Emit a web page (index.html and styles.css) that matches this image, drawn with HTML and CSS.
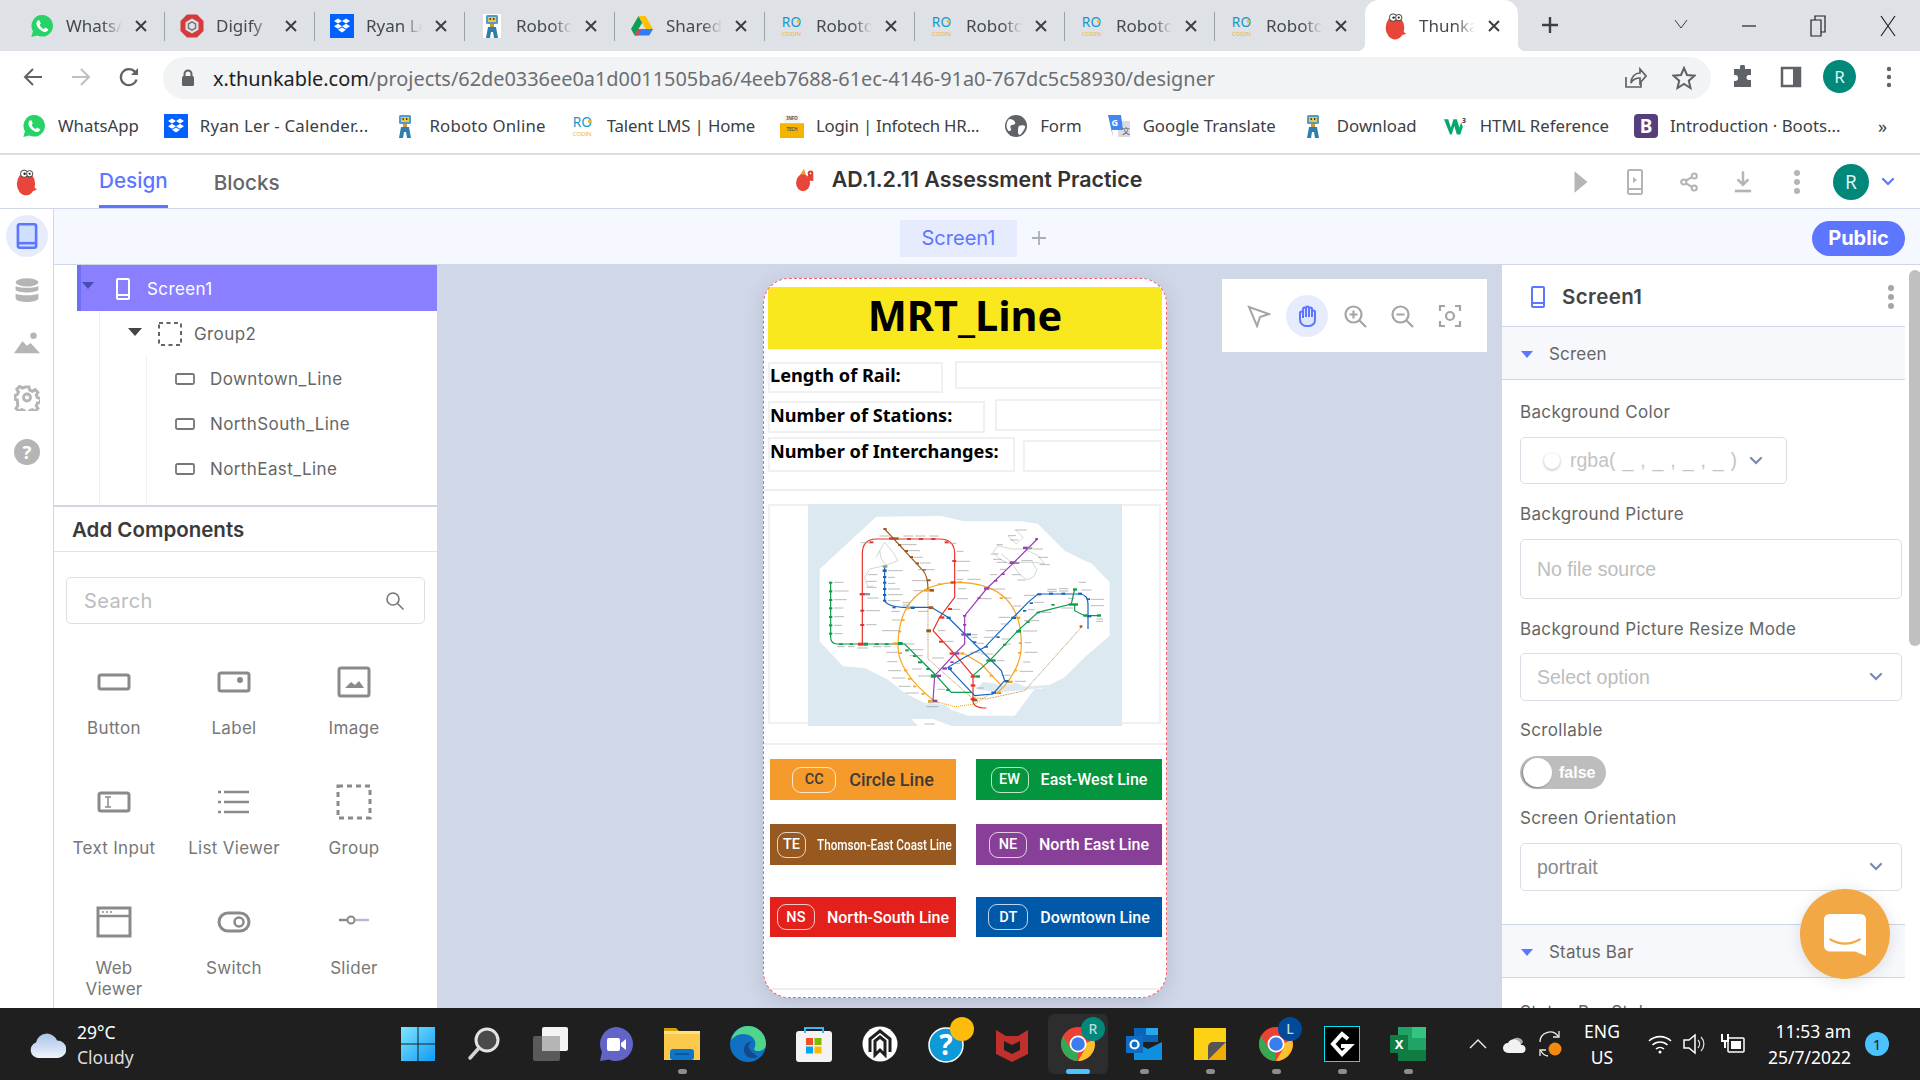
FILE: index.html
```html
<!DOCTYPE html>
<html lang="en">
<head>
<meta charset="utf-8">
<title>Thunkable</title>
<link rel="stylesheet" href="styles.css">
</head>
<body>
<svg class="defs" width="0" height="0" aria-hidden="true">
  <symbol id="wa" viewBox="0 0 24 24"><path fill="#25d366" d="M12.4 1A10.8 10.8 0 0 0 3 17.3L1.3 23l5.9-1.6A10.8 10.8 0 1 0 12.4 1z"/><path fill="#fff" d="M8.4 6.2c-.8.2-2 1.4-2 3.2 0 2 1.6 4.4 3.4 6 2 1.800 4.300 2.800 5.900 2.500 1.300-.3 2.500-1.400 2.500-2.700l-3-1.600-1.300 1.400c-1.800-.6-3.400-2.200-4.300-4.100l1.200-1.300L9.500 6.400z"/></symbol>
  <symbol id="dropbox" viewBox="0 0 24 24"><rect width="24" height="24" fill="#0061ff"/><path fill="#fff" d="M8 4.500l4 2.500-4 2.500L4 7zM16 4.500L20 7l-4 2.500L12 7zM8 9.700l4 2.500-4 2.500-4-2.500zM16 9.700l4 2.500-4 2.500-4-2.500zM8 15.800l4-2.400 4 2.400-4 2.700z"/></symbol>
  <symbol id="digify" viewBox="0 0 24 24"><path fill="#d43b3b" d="M7 .5h10L23.500 7v10L17 23.500H7L.5 17V7z"/><path fill="#dfe1e6" d="M12 4.500l6.500 3.700v7.600L12 19.500l-6.500-3.700V8.200z"/><path fill="#777" d="M12 7l4.300 2.500v5L12 17l-4.300-2.500v-5z"/><path fill="#dfe1e6" d="M12 8.700l2.800 1.600v3.400L12 15.300l-2.800-1.600v-3.400z"/></symbol>
  <symbol id="robot" viewBox="0 0 24 24"><rect x="3" width="18" height="24" fill="#fff"/><rect x="6" y="1" width="12" height="9" rx="1.500" fill="#4f9cc9"/><rect x="8" y="3" width="8" height="5" fill="#f0c445"/><rect x="9.500" y="4" width="1.300" height="2" fill="#333"/><rect x="13" y="4" width="1.300" height="2" fill="#333"/><rect x="10" y="10" width="4" height="3" fill="#c79a3d"/><path fill="#2f7fae" d="M8 13h8l2 11h-4l-1-6h-2l-1 6H6z"/></symbol>
  <symbol id="drive" viewBox="0 0 24 24"><path fill="#0f9d58" d="M8.500 2L1 15l3.700 6.500L12.300 8.500z"/><path fill="#ffc107" d="M8.500 2h7L23 15h-7.500z"/><path fill="#2f7cf6" d="M4.700 21.500L8.400 15H23l-3.700 6.500z"/><path fill="#ea4335" d="M4.700 21.500L8.400 15h3l-3.400 6.500z"/></symbol>
  <symbol id="thunk" viewBox="0 0 24 30"><ellipse cx="12" cy="17" rx="10" ry="12.500" fill="#e8463a"/><path fill="#e8463a" d="M19 20l5 3-4 2z"/><circle cx="10" cy="6" r="4" fill="#fff" stroke="#333"/><circle cx="16" cy="6" r="3.400" fill="#fff" stroke="#333"/><circle cx="10.500" cy="6" r="1.300" fill="#222"/><circle cx="16" cy="6" r="1.200" fill="#222"/></symbol>
  <symbol id="tfav" viewBox="0 0 24 30"><path fill="#e8a23a" d="M6 13l6-9 2 6z"/><ellipse cx="11" cy="19" rx="7.500" ry="9" fill="#e8463a"/><path fill="#e8463a" d="M16 11h6v6h-6z"/><circle cx="19" cy="9" r="3" fill="#d63a30"/><circle cx="19" cy="9" r="1" fill="#fff"/></symbol>
  <symbol id="globe" viewBox="0 0 24 24"><circle cx="12" cy="12" r="11" fill="#5f6368"/><path fill="#fff" d="M5 5c3 0 5 1 6 3s-1 3-3 3-2 3-1 4-1 3-3 1.500A10 10 0 0 1 5 5zM15 12c2-1 5-1 6 0s-2 6-4 8-3 0-3-2 0-5 1-6z"/></symbol>
  <symbol id="phone" viewBox="0 0 14 22"><rect x="1" y="1" width="12" height="20" rx="1" fill="none" stroke="currentColor" stroke-width="2"/><path d="M1 17h12" stroke="currentColor" stroke-width="2"/></symbol>
  <symbol id="chev" viewBox="0 0 14 10"><path d="M2 2l5 5 5-5" fill="none" stroke="currentColor" stroke-width="2.200" stroke-linecap="round"/></symbol>
  <symbol id="tri" viewBox="0 0 14 8"><path d="M0 0h14L7 8z" fill="currentColor"/></symbol>
  <symbol id="closex" viewBox="0 0 12 12"><path d="M1 1l10 10M11 1L1 11" stroke="#3c4043" stroke-width="2"/></symbol>
  <symbol id="chrome" viewBox="0 0 36 36"><circle cx="18" cy="18" r="17" fill="#ea4335"/><path fill="#34a853" d="M18 35A17 17 0 0 1 2.900 10.200L11 23l7 1-1 11z"/><path fill="#fbc02d" d="M35 18c0 9-7.500 17-17 17l7-12 1-6 8-3z"/><circle cx="18" cy="18" r="8.500" fill="#fff"/><circle cx="18" cy="18" r="6.800" fill="#3b7df0"/></symbol>
</svg>

<div class="app">
  <header class="tabs">
    <div class="tab"><svg class="fav"><use href="#wa"/></svg><span class="tab-title">WhatsApp</span><svg class="tab-x"><use href="#closex"/></svg></div>
    <div class="tab"><svg class="fav"><use href="#digify"/></svg><span class="tab-title">Digify</span><svg class="tab-x"><use href="#closex"/></svg></div>
    <div class="tab"><svg class="fav"><use href="#dropbox"/></svg><span class="tab-title">Ryan Ler</span><svg class="tab-x"><use href="#closex"/></svg></div>
    <div class="tab"><svg class="fav"><use href="#robot"/></svg><span class="tab-title">Roboto</span><svg class="tab-x"><use href="#closex"/></svg></div>
    <div class="tab"><svg class="fav"><use href="#drive"/></svg><span class="tab-title">Shared</span><svg class="tab-x"><use href="#closex"/></svg></div>
    <div class="tab"><svg class="fav" viewBox="0 0 22 26"><text x="0" y="14" class="ro-big">RO</text><circle cx="18" cy="8" r="1.800" fill="#f2b632"/><text x="0" y="24" class="ro-small">CODIN</text></svg><span class="tab-title">Roboto</span><svg class="tab-x"><use href="#closex"/></svg></div>
    <div class="tab"><svg class="fav" viewBox="0 0 22 26"><text x="0" y="14" class="ro-big">RO</text><circle cx="18" cy="8" r="1.800" fill="#f2b632"/><text x="0" y="24" class="ro-small">CODIN</text></svg><span class="tab-title">Roboto</span><svg class="tab-x"><use href="#closex"/></svg></div>
    <div class="tab"><svg class="fav" viewBox="0 0 22 26"><text x="0" y="14" class="ro-big">RO</text><circle cx="18" cy="8" r="1.800" fill="#f2b632"/><text x="0" y="24" class="ro-small">CODIN</text></svg><span class="tab-title">Roboto</span><svg class="tab-x"><use href="#closex"/></svg></div>
    <div class="tab tab-last"><svg class="fav" viewBox="0 0 22 26"><text x="0" y="14" class="ro-big">RO</text><circle cx="18" cy="8" r="1.800" fill="#f2b632"/><text x="0" y="24" class="ro-small">CODIN</text></svg><span class="tab-title">Roboto</span><svg class="tab-x"><use href="#closex"/></svg></div>
    <div class="tab tab-active"><svg class="fav fav-tall"><use href="#thunk"/></svg><span class="tab-title">Thunkable</span><svg class="tab-x"><use href="#closex"/></svg></div>
    <svg class="newtab" viewBox="0 0 18 18"><path d="M9 1v16M1 9h16" stroke="#3c4043" stroke-width="2.400"/></svg>
    <div class="win">
      <svg viewBox="0 0 14 10"><path d="M1 1l6 8 6-8" fill="none" stroke="#3c4043"/></svg>
      <svg viewBox="0 0 14 10"><path d="M0 5h14" stroke="#222" stroke-width="1.200"/></svg>
      <svg viewBox="0 0 16 22"><path d="M1 5h10v16H1zM5 5V1h10v16h-4" fill="none" stroke="#222" stroke-width="1.200"/></svg>
      <svg viewBox="0 0 16 22"><path d="M1 1l14 20M15 1L1 21" fill="none" stroke="#222" stroke-width="1.200"/></svg>
    </div>
  </header>

  <nav class="toolbar">
    <svg class="tb-ic" viewBox="0 0 22 22"><path d="M20 11H3M11 3l-8 8 8 8" fill="none" stroke="#5f6368" stroke-width="2"/></svg>
    <svg class="tb-ic" viewBox="0 0 22 22"><path d="M2 11h17M11 3l8 8-8 8" fill="none" stroke="#bdc1c6" stroke-width="2"/></svg>
    <svg class="tb-ic" viewBox="0 0 22 22"><path d="M18.500 13.500A8 8 0 1 1 17 6" fill="none" stroke="#5f6368" stroke-width="2.200"/><path d="M20 2v7h-7z" fill="#5f6368"/></svg>
    <div class="omni">
      <svg class="lock" viewBox="0 0 14 18"><path d="M3.500 8V5a3.500 3.500 0 0 1 7 0v3" fill="none" stroke="#5f6368" stroke-width="2"/><rect x="1" y="7" width="12" height="10" rx="1.500" fill="#5f6368"/></svg>
      <span class="url"><b>x.thunkable.com</b>/projects/62de0336ee0a1d0011505ba6/4eeb7688-61ec-4146-91a0-767dc5c58930/designer</span>
      <svg class="om-ic om-share" viewBox="0 0 24 24"><path d="M3 11v10h15v-5M8 17c0-6 4-10 9-10V3l6 7-6 7v-5c-4 0-7 1-9 5z" fill="none" stroke="#5f6368" stroke-width="1.700"/></svg>
      <svg class="om-ic" viewBox="0 0 24 24"><path d="M12 2l3 7 7.500.7-5.700 5 1.700 7.300L12 18l-6.500 4 1.700-7.300-5.700-5L9 9z" fill="none" stroke="#5f6368" stroke-width="2"/></svg>
    </div>
    <svg class="tb-ext" viewBox="0 0 24 24"><path fill="#5f6368" d="M9 2a2.500 2.500 0 0 1 5 0v2h6v6h-2a2.500 2.500 0 0 0 0 5h2v7H3v-6h1a3 3 0 0 0 0-6H3V4h6z"/></svg>
    <svg class="tb-side" viewBox="0 0 22 22"><path fill="none" stroke="#5f6368" stroke-width="2.500" d="M2 2h18v18H2z"/><path fill="#5f6368" d="M13 2h7v18h-7z"/></svg>
    <span class="avatar avatar-sm">R</span>
    <svg class="tb-dots" viewBox="0 0 6 22"><circle cx="3" cy="3" r="2.200" fill="#5f6368"/><circle cx="3" cy="11" r="2.200" fill="#5f6368"/><circle cx="3" cy="19" r="2.200" fill="#5f6368"/></svg>
  </nav>

  <nav class="bookmarks">
    <div class="bm"><svg class="bm-ic"><use href="#wa"/></svg><span>WhatsApp</span></div>
    <div class="bm bm-loose"><svg class="bm-ic"><use href="#dropbox"/></svg><span>Ryan Ler - Calender...</span></div>
    <div class="bm bm-loose"><svg class="bm-ic"><use href="#robot"/></svg><span>Roboto Online</span></div>
    <div class="bm bm-tight"><svg class="bm-ic" viewBox="0 0 22 26"><text x="0" y="14" class="ro-big">RO</text><circle cx="18" cy="8" r="1.800" fill="#f2b632"/><text x="0" y="24" class="ro-small">CODIN</text></svg><span>Talent LMS | Home</span></div>
    <div class="bm bm-tighter"><svg class="bm-ic" viewBox="0 0 26 26"><rect x="4" y="1" width="18" height="11" fill="#f3f3f3"/><text x="13" y="7" text-anchor="middle" class="info-t">INFO</text><rect y="10" width="26" height="16" fill="#f5b400"/><text x="13" y="18" text-anchor="middle" class="info-t">TECH</text></svg><span>Login | Infotech HR...</span></div>
    <div class="bm"><svg class="bm-ic"><use href="#globe"/></svg><span>Form</span></div>
    <div class="bm"><svg class="bm-ic" viewBox="0 0 24 24"><path fill="#dadce0" d="M11 7h12v16H11z"/><path fill="#4285f4" d="M1 1h13l2 15H5l1 7z"/><text x="4.500" y="12" class="gt-g">G</text><text x="15" y="20" class="gt-t">文</text></svg><span>Google Translate</span></div>
    <div class="bm bm-gap"><svg class="bm-ic"><use href="#robot"/></svg><span>Download</span></div>
    <div class="bm"><svg class="bm-ic" viewBox="0 0 28 24"><path fill="#04a96d" d="M0 4h5l3 10 3-10h4l3 10 2-6 2 5-3 9h-4l-3-10-3 10H7z"/><text x="21" y="8" class="w3-t">3</text></svg><span>HTML Reference</span></div>
    <div class="bm"><svg class="bm-ic" viewBox="0 0 24 24"><rect width="24" height="24" rx="4" fill="#563d7c"/><text x="12" y="19" text-anchor="middle" class="boot-t">B</text></svg><span>Introduction · Boots...</span></div>
    <span class="bm-more">»</span>
  </nav>

  <div class="apphead">
    <svg class="app-logo"><use href="#thunk"/></svg>
    <div class="apptab apptab-on">Design</div>
    <div class="apptab">Blocks</div>
    <div class="project"><svg class="proj-logo"><use href="#tfav"/></svg><span>AD.1.2.11 Assessment Practice</span></div>
    <div class="head-acts">
      <svg viewBox="0 0 14 24"><path d="M1 2l12 10L1 22z" fill="#b5b5b5"/></svg>
      <svg viewBox="0 0 16 26"><rect x="1" y="1" width="14" height="24" rx="1.500" fill="none" stroke="#b5b5b5" stroke-width="2"/><path d="M1 20h14" stroke="#b5b5b5" stroke-width="2"/><path d="M6 8l4 3-4 3z" fill="#b5b5b5"/></svg>
      <svg viewBox="0 0 24 26"><g fill="none" stroke="#b5b5b5" stroke-width="2.800"><circle cx="19" cy="5" r="3.400"/><circle cx="5" cy="13" r="3.400"/><circle cx="19" cy="21" r="3.400"/><path d="M8 11l8-4.500M8 15l8 4.500"/></g></svg>
      <svg viewBox="0 0 20 26"><path d="M10 1v15M4 10l6 6 6-6" fill="none" stroke="#b5b5b5" stroke-width="2.800"/><path d="M1 23h18" stroke="#b5b5b5" stroke-width="3"/></svg>
      <svg viewBox="0 0 8 26"><circle cx="4" cy="4" r="3" fill="#b5b5b5"/><circle cx="4" cy="13" r="3" fill="#b5b5b5"/><circle cx="4" cy="22" r="3" fill="#b5b5b5"/></svg>
    </div>
    <span class="avatar avatar-lg">R</span>
    <svg class="head-chev"><use href="#chev"/></svg>
  </div>

  <main class="work">
    <aside class="rail">
      <div class="rail-item rail-on"><svg viewBox="0 0 16 20"><rect x="1" y="1" width="14" height="18" rx="1.500" fill="#cfe0ff" stroke="#5d76ff" stroke-width="2"/><path d="M1 15.500h14" stroke="#5d76ff" stroke-width="2"/></svg></div>
      <div class="rail-item"><svg viewBox="0 -1 22 24"><g fill="#b5b5b5"><ellipse cx="11" cy="4" rx="10.500" ry="3.800"/><path d="M.5 7c2 2.500 19 2.500 21 0v4c-2 3-19 3-21 0zM.5 14c2 2.500 19 2.500 21 0v5c-2 4-19 4-21 0z"/></g></svg></div>
      <div class="rail-item"><svg viewBox="0 -2 28 28"><g fill="#b5b5b5"><circle cx="21" cy="3" r="3.500"/><path d="M0 22l9-13 5 5 4-3 10 11z"/></g></svg></div>
      <div class="rail-item"><svg viewBox="0 0 26 26"><path fill="none" stroke="#b5b5b5" stroke-width="3" d="M11 2h4l.7 3 2.700 1.200 2.700-1.600 2.800 2.800-1.600 2.700 1.100 2.600 3 .7v4l-3 .7-1.100 2.600 1.600 2.700-2.800 2.800-2.700-1.600-2.700 1.100-.7 3h-4l-.7-3-2.700-1.100-2.700 1.600-2.800-2.800 1.600-2.700L3.300 15 1 14.300v-4l2.300-.7 1.100-2.700-1.600-2.700 2.800-2.800L8.300 3z"/><circle cx="13" cy="12.500" r="3.500" fill="none" stroke="#b5b5b5" stroke-width="2.800"/></svg></div>
      <div class="rail-item"><svg viewBox="0 0 28 28"><circle cx="14" cy="14" r="14" fill="#b5b5b5"/><text x="14" y="21" text-anchor="middle" class="help-q">?</text></svg></div>
    </aside>

    <div class="stage">
      <div class="subbar">
        <div class="screen-tab">Screen1</div>
        <svg class="screen-add" viewBox="0 0 16 16"><path d="M8 1v14M1 8h14" stroke="#a9aeb9" stroke-width="1.800"/></svg>
        <div class="public">Public</div>
      </div>

      <div class="panels">
        <section class="left">
          <div class="tree">
            <div class="row-screen"><svg class="tri-s"><use href="#tri"/></svg><svg class="ic-phone-w"><use href="#phone"/></svg><span>Screen1</span></div>
            <div class="tree-l1">
              <div class="row-group"><svg class="tri-g"><use href="#tri"/></svg><svg class="ic-group" viewBox="0 0 24 24"><rect x="1" y="1" width="22" height="22" fill="none" stroke="#666" stroke-width="2" stroke-dasharray="4 3.500"/></svg><span>Group2</span></div>
              <div class="tree-l2">
                <div class="row-item"><svg class="ic-btn" viewBox="0 0 20 12"><rect x="1" y="1" width="18" height="10" rx="1.500" fill="none" stroke="#777" stroke-width="1.800"/></svg><span>Downtown_Line</span></div>
                <div class="row-item"><svg class="ic-btn" viewBox="0 0 20 12"><rect x="1" y="1" width="18" height="10" rx="1.500" fill="none" stroke="#777" stroke-width="1.800"/></svg><span>NorthSouth_Line</span></div>
                <div class="row-item"><svg class="ic-btn" viewBox="0 0 20 12"><rect x="1" y="1" width="18" height="10" rx="1.500" fill="none" stroke="#777" stroke-width="1.800"/></svg><span>NorthEast_Line</span></div>
              </div>
            </div>
          </div>
          <h3 class="add-title">Add Components</h3>
          <div class="search"><span>Search</span><svg viewBox="0 0 20 20"><circle cx="8" cy="8" r="6" fill="none" stroke="#777" stroke-width="1.600"/><path d="M12.500 12.500l6 6" stroke="#777" stroke-width="1.600"/></svg></div>
          <div class="comps">
            <div class="comp"><svg viewBox="0 0 36 36"><rect x="3" y="11" width="30" height="14" rx="2" fill="none" stroke="#8a8a8a" stroke-width="3"/></svg><span>Button</span></div>
            <div class="comp"><svg viewBox="0 0 36 36"><rect x="3" y="9" width="30" height="18" rx="2" fill="none" stroke="#8a8a8a" stroke-width="3"/><circle cx="24" cy="16" r="3" fill="#8a8a8a"/></svg><span>Label</span></div>
            <div class="comp"><svg viewBox="0 0 36 36"><rect x="3" y="4" width="30" height="28" rx="2" fill="none" stroke="#8a8a8a" stroke-width="3"/><path d="M9 24l6-6 4 3 4-4 5 7z" fill="#8a8a8a"/></svg><span>Image</span></div>
            <div class="comp"><svg viewBox="0 0 36 36"><rect x="3" y="9" width="30" height="18" rx="2" fill="none" stroke="#8a8a8a" stroke-width="3"/><path d="M9 13h6M9 23h6M12 13v10" stroke="#8a8a8a" stroke-width="1.500"/></svg><span>Text Input</span></div>
            <div class="comp"><svg viewBox="0 0 36 36"><path d="M8 8h25M8 18h25M8 28h25" stroke="#8a8a8a" stroke-width="2.600"/><path d="M2 8h3M2 18h3M2 28h3" stroke="#8a8a8a" stroke-width="2.600"/></svg><span>List Viewer</span></div>
            <div class="comp"><svg viewBox="0 0 36 36"><rect x="2" y="2" width="32" height="32" fill="none" stroke="#8a8a8a" stroke-width="3" stroke-dasharray="5 4"/></svg><span>Group</span></div>
            <div class="comp"><svg viewBox="0 0 36 36"><rect x="2" y="4" width="32" height="28" fill="none" stroke="#8a8a8a" stroke-width="3"/><path d="M2 12h32" stroke="#8a8a8a" stroke-width="2.500"/><path d="M6 8h10" stroke="#8a8a8a" stroke-width="1.500" stroke-dasharray="2 2"/></svg><span>Web<br>Viewer</span></div>
            <div class="comp"><svg viewBox="0 0 36 36"><rect x="3" y="9" width="30" height="18" rx="9" fill="none" stroke="#8a8a8a" stroke-width="3"/><circle cx="23" cy="18" r="4.500" fill="none" stroke="#8a8a8a" stroke-width="2.500"/></svg><span>Switch</span></div>
            <div class="comp"><svg viewBox="0 0 36 36"><path d="M3 16h8" stroke="#8a8a8a" stroke-width="2.500"/><path d="M19 16h14" stroke="#b9b8d8" stroke-width="2.500"/><circle cx="15" cy="16" r="3.500" fill="none" stroke="#8a8a8a" stroke-width="2"/></svg><span>Slider</span></div>
          </div>
        </section>

        <section class="canvas">
          <div class="phone">
            <div class="ph-title">MRT_Line</div>
            <div class="ph-row ph-row1"><div class="ph-label ph-l1">Length of Rail:</div><div class="ph-input ph-i1"></div></div>
            <div class="ph-row ph-row2"><div class="ph-label ph-l2">Number of Stations:</div><div class="ph-input ph-i2"></div></div>
            <div class="ph-row ph-row3"><div class="ph-label ph-l3">Number of Interchanges:</div><div class="ph-input ph-i3"></div></div>
            <div class="ph-rule ph-rule1"></div>
            <div class="ph-image">
              <svg class="map" viewBox="0 0 942 666">
                <rect width="942" height="666" fill="#dce9f1"/>
                <path fill="#fff" d="M205 38L400 36l70 16 170 0 50 8 80 80 60 30 20 8 55 57v160l-75 65-60 60-70 35h-20l-60 80H480l-50-18-20-15-60-5-60-30-50-40-70-35-65-5-70-75V195z"/>
                <path fill="#fff" d="M310 645h65l55 21H330z"/>
                <path fill="#dce9f1" d="M505 556l20-22 30 4 25 8 45-10 25 12 75-6 20 6-100 10-60 6-40-2z"/>
                <g fill="none" stroke-width="1.500" stroke="#9fb3a5">
                  <path d="M230 115l-15 25 5 25 15 20M230 115l25 30 15 25-40 15-45 10-15 25 10 30 15-5M215 140l-10 20"/>
                  <path d="M650 135l-40 0-40-10-15 20 20 20 30 15M650 135l40 20 20 25-30-5-30 0-40 0-30-25M612 178l20 30 25 20 20-10 10-20-15-25M625 80l20 20-20 20-25-25"/>
                </g>
                <g fill="none" stroke-width="3.600">
                  <path stroke="#f5a623" d="M380 592Q265 500 270 420 275 235 455 235 640 240 640 420 640 500 570 565"/>
                  <path stroke="#f5a623" d="M470 450l50 30 60 65"/>
                  <path stroke="#f5a623" stroke-dasharray="3 3" d="M380 592l60 16 60-8 45-30"/>
                  <path stroke="#9c5a1e" d="M230 75L345 200q15 15 15 60"/>
                  <path stroke="#9c5a1e" stroke-width="2" stroke-dasharray="3 2" d="M360 260V465l130 115 45 5 115-25L820 370"/>
                  <path stroke="#e5342b" d="M163 420V150q0-45 42-45H395q45 0 45 45V280L395 340 375 380 440 450 495 515V590q0 22 40 22"/>
                  <path stroke="#9b3cb7" d="M688 105L615 178 535 255 470 335V420L440 450 380 515 375 592"/>
                  <path stroke="#1565c0" d="M230 190V290q10 20 70 20H370l50 30L580 500l10 30-35 40-55 5-80-85 50-30 60-30L660 295l30-25H815q25 2 25 30v75"/>
                  <path stroke="#0d9b4c" d="M68 235V400q0 20 20 20H290l90 90 50 55h60"/>
                  <path stroke="#0d9b4c" d="M495 515L545 470 630 380 690 325l100-25 10-45M800 300v20l30 15h40"/>
                </g>
                <g fill="#e5342b"><rect x="155" y="267" width="16" height="7"/><rect x="157" y="317" width="12" height="6"/><rect x="157" y="360" width="12" height="6"/><rect x="150" y="416" width="16" height="9"/><rect x="184" y="112" width="12" height="6"/><rect x="243" y="100" width="16" height="7"/><rect x="297" y="102" width="12" height="6"/><rect x="333" y="102" width="12" height="6"/><rect x="370" y="102" width="12" height="6"/><rect x="410" y="112" width="12" height="6"/><rect x="433" y="168" width="12" height="6"/><rect x="428" y="232" width="14" height="7"/><rect x="420" y="312" width="12" height="6"/><rect x="395" y="337" width="14" height="7"/><rect x="393" y="410" width="12" height="6"/><rect x="425" y="445" width="14" height="7"/><rect x="488" y="514" width="14" height="7"/><rect x="488" y="541" width="14" height="7"/><rect x="488" y="582" width="14" height="7"/></g>
                <g fill="#f5a623"><rect x="255" y="415" width="14" height="8"/><rect x="348" y="255" width="14" height="8"/><rect x="390" y="238" width="10" height="5"/><rect x="450" y="232" width="12" height="5"/><rect x="575" y="280" width="10" height="5"/><rect x="625" y="338" width="12" height="7"/><rect x="632" y="415" width="10" height="5"/><rect x="630" y="444" width="10" height="5"/><rect x="618" y="497" width="10" height="5"/><rect x="600" y="530" width="14" height="7"/><rect x="565" y="563" width="14" height="7"/><rect x="295" y="309" width="12" height="7"/><rect x="280" y="346" width="10" height="5"/><rect x="270" y="380" width="10" height="5"/><rect x="272" y="445" width="10" height="5"/><rect x="288" y="497" width="10" height="5"/><rect x="300" y="522" width="10" height="5"/><rect x="315" y="545" width="10" height="5"/><rect x="340" y="567" width="10" height="5"/><rect x="360" y="588" width="14" height="7"/><rect x="457" y="445" width="12" height="7"/><rect x="545" y="513" width="10" height="5"/></g>
                <g fill="#1565c0"><rect x="224" y="196" width="12" height="8"/><rect x="225" y="216" width="10" height="6"/><rect x="225" y="233" width="10" height="6"/><rect x="225" y="252" width="10" height="6"/><rect x="225" y="270" width="10" height="6"/><rect x="225" y="287" width="10" height="6"/><rect x="253" y="308" width="10" height="5"/><rect x="308" y="308" width="12" height="7"/><rect x="416" y="338" width="12" height="7"/><rect x="475" y="388" width="14" height="7"/><rect x="495" y="412" width="10" height="5"/><rect x="530" y="426" width="10" height="5"/><rect x="565" y="397" width="10" height="5"/><rect x="610" y="338" width="14" height="7"/><rect x="645" y="318" width="10" height="5"/><rect x="665" y="295" width="10" height="5"/><rect x="688" y="268" width="12" height="6"/><rect x="723" y="266" width="12" height="6"/><rect x="760" y="266" width="12" height="6"/><rect x="810" y="266" width="12" height="6"/><rect x="836" y="283" width="10" height="5"/><rect x="836" y="333" width="14" height="7"/><rect x="420" y="490" width="12" height="7"/><rect x="550" y="563" width="14" height="7"/><rect x="590" y="528" width="12" height="7"/></g>
                <g fill="#0d9b4c"><rect x="63" y="233" width="10" height="6"/><rect x="63" y="259" width="10" height="6"/><rect x="63" y="285" width="10" height="6"/><rect x="63" y="310" width="10" height="6"/><rect x="63" y="336" width="10" height="6"/><rect x="63" y="361" width="10" height="6"/><rect x="63" y="386" width="10" height="6"/><rect x="93" y="418" width="12" height="5"/><rect x="125" y="418" width="10" height="5"/><rect x="166" y="416" width="14" height="9"/><rect x="200" y="418" width="12" height="5"/><rect x="230" y="418" width="12" height="5"/><rect x="270" y="414" width="14" height="9"/><rect x="292" y="436" width="10" height="6"/><rect x="315" y="453" width="10" height="6"/><rect x="330" y="472" width="12" height="6"/><rect x="355" y="492" width="10" height="6"/><rect x="368" y="511" width="16" height="10"/><rect x="415" y="555" width="10" height="6"/><rect x="502" y="514" width="14" height="7"/><rect x="535" y="466" width="28" height="7"/><rect x="585" y="420" width="10" height="5"/><rect x="625" y="378" width="14" height="8"/><rect x="655" y="352" width="10" height="5"/><rect x="686" y="323" width="10" height="5"/><rect x="730" y="300" width="10" height="5"/><rect x="782" y="298" width="28" height="7"/><rect x="795" y="253" width="12" height="7"/><rect x="826" y="331" width="14" height="7"/><rect x="867" y="331" width="12" height="7"/></g>
                <g fill="#9b3cb7"><rect x="682" y="102" width="8" height="6"/><rect x="645" y="128" width="16" height="7"/><rect x="605" y="172" width="20" height="8"/><rect x="580" y="208" width="10" height="5"/><rect x="558" y="228" width="10" height="5"/><rect x="528" y="250" width="16" height="7"/><rect x="508" y="280" width="10" height="5"/><rect x="465" y="333" width="10" height="5"/><rect x="465" y="360" width="10" height="5"/><rect x="460" y="388" width="14" height="7"/><rect x="440" y="445" width="14" height="7"/><rect x="427" y="472" width="10" height="5"/><rect x="403" y="490" width="14" height="7"/><rect x="385" y="512" width="14" height="7"/><rect x="374" y="587" width="14" height="7"/></g>
                <g fill="#9c5a1e"><rect x="226" y="72" width="10" height="6"/><rect x="258" y="100" width="14" height="7"/><rect x="270" y="120" width="10" height="6"/><rect x="290" y="138" width="10" height="6"/><rect x="305" y="156" width="10" height="6"/><rect x="323" y="175" width="10" height="6"/><rect x="345" y="195" width="8" height="5"/><rect x="356" y="226" width="12" height="6"/><rect x="364" y="255" width="14" height="8"/><rect x="362" y="307" width="14" height="8"/><rect x="355" y="376" width="14" height="9"/><rect x="492" y="585" width="16" height="7"/><rect x="815" y="364" width="8" height="7"/></g>
                <g fill="#83a08d"><rect x="170" y="267" width="16" height="7"/><rect x="224" y="184" width="14" height="7"/><rect x="659" y="130" width="14" height="6"/><rect x="620" y="174" width="14" height="6"/></g>
                <path fill="none" stroke="#8d8d8d" stroke-width="1.800" d="M78 235h28M78 261h44M78 287h38M78 312h28M78 338h30M78 364h24M78 389h26M88 428h22M120 428h20M148 432h32M195 428h26M228 428h20M286 420h34M252 348h26M222 380h48M235 445h34M238 473h30M241 500h38M252 522h40M272 547h36M292 567h40M300 437h46M305 455h40M312 495h30M330 516h36M388 556h24M240 200h44M240 220h20M240 238h22M240 255h36M240 272h44M240 290h36M250 322h26M284 296h22M284 303h22M330 322h30M180 212h28M176 232h30M176 250h30M178 282h34M174 320h42M174 362h32M214 96h30M286 96h30M322 96h30M364 96h28M158 116h26M423 118h22M446 142h20M446 172h40M446 200h36M446 226h20M450 254h24M446 284h34M432 316h24M282 122h44M300 140h36M316 160h28M336 177h32M330 197h50M312 230h46M316 260h28M390 380h22M408 412h28M478 226h40M545 255h46M519 284h32M588 282h22M616 306h24M572 340h34M578 360h24M533 380h40M527 400h36M580 405h26M585 420h24M490 392h18M490 400h18M506 418h22M487 445h30M518 450h36M566 470h24M645 381h42M650 416h20M650 445h38M645 474h22M635 502h40M620 532h34M580 514h28M557 568h26M372 462h36M436 446h20M436 478h20M505 552h22M648 350h46M700 325h30M718 256h28M718 262h28M753 254h28M753 261h28M780 283h20M760 312h36M648 274h40M678 295h30M660 317h20M812 235h22M820 258h30M848 286h40M848 305h40M865 345h20M865 352h20M565 122h20M548 150h24M555 166h26M576 196h22M546 212h22M566 175h30M612 212h26M628 228h24M640 170h34M675 135h30M690 160h30M695 182h30M620 78h36M600 95h24M606 108h24M360 596h34M355 608h36M350 660h30"/>
              </svg>
            </div>
            <div class="ph-rule ph-rule2"></div>
            <div class="badges">
              <div class="badge b-cc"><span class="pill p-cc">CC</span><span class="b-txt">Circle Line</span></div>
              <div class="badge b-ew"><span class="pill p-md">EW</span><span class="b-txt">East-West Line</span></div>
              <div class="badge b-te"><span class="pill p-sm">TE</span><span class="b-txt b-narrow">Thomson-East Coast Line</span></div>
              <div class="badge b-ne"><span class="pill p-md">NE</span><span class="b-txt">North East Line</span></div>
              <div class="badge b-ns b-low"><span class="pill p-md">NS</span><span class="b-txt">North-South Line</span></div>
              <div class="badge b-dt b-low"><span class="pill p-lg">DT</span><span class="b-txt">Downtown Line</span></div>
            </div>
            <div class="ph-rule ph-rule3"></div>
          </div>

          <div class="canvas-tools">
            <svg viewBox="0 0 24 24"><path d="M2 3l20 7-9 3-3 9z" fill="none" stroke="#a5a5a5" stroke-width="2"/></svg>
            <span class="tool-on"><svg viewBox="0 0 24 24"><path d="M5 13V9a1.500 1.500 0 0 1 3 0V5a1.500 1.500 0 0 1 3 0V4a1.500 1.500 0 0 1 3 0v1a1.500 1.500 0 0 1 3 0v3a1.500 1.500 0 0 1 3 0v8a6 6 0 0 1-6 6h-3c-3 0-6-3-6-6zM8 9v5M11 5v8M14 4v9M17 6v7" fill="#dfe6ff" stroke="#5d76ff" stroke-width="2"/></svg></span>
            <svg viewBox="0 0 24 24"><circle cx="10.500" cy="10.500" r="8" fill="none" stroke="#a5a5a5" stroke-width="2.200"/><path d="M16.500 16.500L23 23M6.500 10.500h8M10.500 6.500v8" stroke="#a5a5a5" stroke-width="2.200"/></svg>
            <svg viewBox="0 0 24 24"><circle cx="10.500" cy="10.500" r="8" fill="none" stroke="#a5a5a5" stroke-width="2.200"/><path d="M16.500 16.500L23 23M6.500 10.500h8" stroke="#a5a5a5" stroke-width="2.200"/></svg>
            <svg viewBox="0 0 24 24"><path d="M2 7V2h5M17 2h5v5M22 17v5h-5M7 22H2v-5" fill="none" stroke="#a5a5a5" stroke-width="2.200"/><circle cx="12" cy="12" r="4" fill="none" stroke="#a5a5a5" stroke-width="2.200"/></svg>
          </div>
        </section>

        <section class="right">
          <div class="props">
            <div class="prop-head"><svg class="ic-phone-b"><use href="#phone"/></svg><span>Screen1</span><svg class="prop-dots" viewBox="0 0 8 26"><circle cx="4" cy="4" r="3" fill="#a5a5a5"/><circle cx="4" cy="13" r="3" fill="#a5a5a5"/><circle cx="4" cy="22" r="3" fill="#a5a5a5"/></svg></div>
            <div class="sec"><svg class="sec-tri"><use href="#tri"/></svg><span>Screen</span></div>
            <div class="form">
              <label class="f-label f-first">Background Color</label>
              <div class="f-box f-color"><span class="swatch"></span><span class="rgba">rgba( _ , _ , _ , _ )</span><svg class="f-chev"><use href="#chev"/></svg></div>
              <label class="f-label">Background Picture</label>
              <div class="f-box f-tall">No file source</div>
              <label class="f-label">Background Picture Resize Mode</label>
              <div class="f-box f-tight">Select option<svg class="f-chev f-end"><use href="#chev"/></svg></div>
              <label class="f-label f-l16">Scrollable</label>
              <div class="toggle"><span class="knob"></span><span>false</span></div>
              <label class="f-label f-l16">Screen Orientation</label>
              <div class="f-box f-val">portrait<svg class="f-chev f-end"><use href="#chev"/></svg></div>
            </div>
            <div class="sec sec-status"><svg class="sec-tri"><use href="#tri"/></svg><span>Status Bar</span></div>
            <label class="f-label f-cut">Status Bar Style</label>
          </div>
          <div class="scroll"><span class="thumb"></span></div>
        </section>
      </div>
    </div>
  </main>

  <div class="chat"><svg viewBox="0 0 46 46"><path fill="#fff" d="M6 0h34a6 6 0 0 1 6 6v40l-12-5H6a6 6 0 0 1-6-6V6a6 6 0 0 1 6-6z"/><path d="M7 28q16 9 32 0" fill="none" stroke="#f2a945" stroke-width="2.500" stroke-linecap="round"/></svg></div>

  <footer class="taskbar">
    <div class="weather">
      <svg viewBox="0 0 36 32"><defs><linearGradient id="cl" x1="0" y1="0" x2="0" y2="1"><stop offset="0" stop-color="#a9c3e8"/><stop offset="1" stop-color="#eef3fb"/></linearGradient></defs><path fill="url(#cl)" d="M8 30a8 8 0 0 1-2-15.500 11 11 0 0 1 21-2A8.500 8.500 0 0 1 28 30z"/></svg>
      <div class="w-txt"><span>29°C</span><span class="w-sub">Cloudy</span></div>
    </div>
    <div class="dock">
      <div class="dk"><svg viewBox="0 0 36 36"><defs><linearGradient id="win" x1="0" y1="0" x2="1" y2="1"><stop offset="0" stop-color="#7fe6ff"/><stop offset="1" stop-color="#0f9bf5"/></linearGradient></defs><path fill="url(#win)" d="M1 1h16.500v16.500H1zM18.500 1H35v16.500H18.500zM1 18.500h16.500V35H1zM18.500 18.500H35V35H18.500z"/></svg></div>
      <div class="dk"><svg viewBox="0 0 36 36"><circle cx="21" cy="14" r="11" fill="#4a4a4a" stroke="#e4e4e4" stroke-width="3"/><path d="M12 23l-8 9" stroke="#d4d4d4" stroke-width="3.500" stroke-linecap="round"/></svg></div>
      <div class="dk"><svg viewBox="0 0 36 36"><rect x="1" y="10" width="27" height="25" rx="2" fill="#5a5a5a"/><rect x="10" y="1" width="26" height="24" rx="2" fill="#f4f4f4"/><rect x="10" y="10" width="18" height="15" fill="#b5b5b5"/></svg></div>
      <div class="dk"><svg viewBox="0 0 36 36"><path fill="#6264c8" d="M18 1a17 17 0 1 1-7 32.500L2 35l2-9A17 17 0 0 1 18 1z"/><rect x="9" y="12" width="13" height="13" rx="2" fill="#fff"/><path d="M23 17l5-4v11l-5-4z" fill="#fff"/></svg></div>
      <div class="dk dk-dot"><svg viewBox="0 0 36 36"><path fill="#d69e0f" d="M0 2h12l4 4h-16z"/><path fill="#fbc94d" d="M0 5h36v29H0z"/><path fill="#ffe27f" d="M0 5h36v3H0z"/><rect x="6" y="23" width="24" height="11" rx="3" fill="#0f75c8"/><path d="M11 28h14" stroke="#0a4f8c" stroke-width="1.500"/></svg></div>
      <div class="dk"><svg viewBox="0 0 36 36"><circle cx="18" cy="18" r="18" fill="#0f70c4"/><path fill="#4fd68b" d="M18 0a18 18 0 0 1 18 18c0 5-4 7-8 7-3 0-5-2-3-4 2-8-4-13-12-13C7 8 3 12 1 14 3 6 10 0 18 0z"/><path fill="#134a8e" d="M28 31c-8 3-14-1-14-7s4-9 9-8c-3 0-5 3-4 6s5 5 9 9z"/></svg></div>
      <div class="dk"><svg viewBox="0 0 36 36"><rect y="5" width="36" height="31" rx="3" fill="#f3f3f3"/><path fill="none" stroke="#3cb6ee" stroke-width="2" d="M9 7V2h18v5"/><path fill="#f25022" d="M10 12h7v7h-7z"/><path fill="#7fba00" d="M18.500 12h7v7h-7z"/><path fill="#00a4ef" d="M10 20.500h7v7h-7z"/><path fill="#ffb900" d="M18.500 20.500h7v7h-7z"/></svg></div>
      <div class="dk"><svg viewBox="0 0 36 36"><circle cx="18" cy="18" r="17.500" fill="#fff"/><path fill="none" stroke="#1f1f1f" stroke-width="3" d="M8 26V13l10-8 10 8v13M13 29V15l5-4 5 4v14l-5-5z"/></svg></div>
      <div class="dk"><svg class="big" viewBox="0 0 46 46"><circle cx="18" cy="28" r="17" fill="#0e9ad8" stroke="#fff" stroke-width="1.500"/><text x="18" y="38" text-anchor="middle" class="qmark">?</text><circle cx="34" cy="12" r="12" fill="#fdbc0b"/></svg></div>
      <div class="dk"><svg viewBox="0 0 36 36"><path fill="#c0302c" d="M2 4l10 6h12l10-6v24L18 36 2 28z"/><path fill="#1f1f1f" d="M10 15l8 4 8-4v9l-8 4-8-4z"/></svg></div>
      <div class="dk dk-on"><svg class="big" viewBox="0 0 46 46"><use href="#chrome" x="0" y="9" width="36" height="36"/><circle cx="33" cy="12" r="12" fill="#00897b"/><text x="33" y="17" text-anchor="middle" class="ov-letter">R</text></svg></div>
      <div class="dk dk-dot"><svg viewBox="0 0 36 36"><path fill="#0a64b8" d="M8 2h24v14H8z"/><path fill="#28a8ea" d="M20 2h12v7H20z"/><path fill="#0f8fe0" d="M8 16l14 7 14-7v18H8z"/><rect y="10" width="17" height="17" fill="#0f6cc4"/><circle cx="8.500" cy="18.500" r="4" fill="none" stroke="#fff" stroke-width="2.200"/></svg></div>
      <div class="dk dk-dot"><svg viewBox="0 0 36 36"><rect x="2" y="2" width="32" height="32" fill="#fcd116"/><path fill="#efab08" d="M16 34l18-18v18z"/><path fill="#555" d="M16 34V21a5 5 0 0 1 5-5h13z"/></svg></div>
      <div class="dk dk-dot"><svg class="big" viewBox="0 0 46 46"><use href="#chrome" x="0" y="9" width="36" height="36"/><circle cx="32" cy="12" r="12" fill="#004a99"/><text x="32" y="17" text-anchor="middle" class="ov-letter">L</text></svg></div>
      <div class="dk dk-dot"><svg viewBox="0 0 36 36"><rect x=".5" y=".5" width="35" height="35" fill="#000" stroke="#00e5f2"/><path fill="none" stroke="#fff" stroke-width="4" d="M24 13l-6-5-9 10 9 10 8-8h-9"/></svg></div>
      <div class="dk dk-dot"><svg viewBox="0 0 36 36"><path fill="#21a366" d="M8 1h28v34H8z"/><path fill="#33c481" d="M22 1h14v11H22z"/><path fill="#107c41" d="M8 24h28v11H8z"/><rect y="9" width="18" height="18" fill="#107c41"/><text x="9" y="23" text-anchor="middle" class="xl">X</text></svg></div>
    </div>
    <div class="tray">
      <svg class="tr-up" viewBox="0 0 18 10"><path d="M1 9l8-8 8 8" fill="none" stroke="#eee" stroke-width="1.400"/></svg>
      <svg class="tr-cloud" viewBox="0 0 24 18"><path fill="#aaa" d="M9 6a6 6 0 0 1 11 1l-3 4H9z"/><path fill="#f2f2f2" d="M5 18a5 5 0 0 1 0-10 7 7 0 0 1 13 2 4 4 0 0 1 1 8z"/></svg>
      <svg class="tr-sync" viewBox="0 0 26 30"><path d="M3 13a10 10 0 0 1 18-6M4 22a9 9 0 0 0 7 5" fill="none" stroke="#eee" stroke-width="1.300"/><path d="M22 2v6h-6M3 27v-6h6" fill="none" stroke="#eee" stroke-width="1.300"/><circle cx="18" cy="20" r="6.500" fill="#f28a10"/></svg>
      <div class="tr-lang"><span>ENG</span><span>US</span></div>
      <svg class="tr-wifi" viewBox="0 0 24 20"><path d="M1 7a16 16 0 0 1 22 0M4.500 11a11 11 0 0 1 15 0M8 15a6 6 0 0 1 8 0" fill="none" stroke="#fff" stroke-width="1.600"/><circle cx="12" cy="18" r="1.500" fill="#fff"/></svg>
      <svg class="tr-vol" viewBox="0 0 24 22"><path d="M1 7h5l6-5v18l-6-5H1z" fill="none" stroke="#fff" stroke-width="1.500"/><path d="M15 7a6 6 0 0 1 0 8M18 4a10 10 0 0 1 0 14" fill="none" stroke="#ddd" stroke-width="1.300"/></svg>
      <svg class="tr-bat" viewBox="0 0 26 22"><rect x="8" y="5" width="16" height="14" rx="1" fill="none" stroke="#fff" stroke-width="1.500"/><rect x="11" y="8" width="10" height="8" fill="#fff"/><path d="M2 1v7h6V1M5 8v7" stroke="#fff" stroke-width="2" fill="none"/></svg>
      <div class="tr-time"><span>11:53 am</span><span>25/7/2022</span></div>
      <span class="tr-note">1</span>
    </div>
  </footer>
</div>
</body>
</html>
```
FILE: styles.css
```css
* { box-sizing: border-box; }
html, body { margin: 0; height: 100%; overflow: hidden; }
body { font-family: "Inter", "Noto Sans", sans-serif; color: #555; background: #fff; }
.defs { position: absolute; }
.app { position: relative; display: flex; flex-direction: column; width: 1920px; height: 1080px; overflow: hidden; }
svg { display: block; flex: none; }

.ro-big { font: 400 15px "Noto Sans", sans-serif; fill: #1697c9; }
.ro-small { font: 400 6.500px "Noto Sans", sans-serif; fill: #f2b632; }
.gt-g { font: 700 9px "Noto Sans", sans-serif; fill: #fff; }
.gt-t { font: 400 8px "Noto Sans CJK SC", sans-serif; fill: #555; }
.w3-t { font: 700 8px "Noto Sans", sans-serif; fill: #333; }
.boot-t { font: 700 19px "Noto Sans", sans-serif; fill: #fff; }
.info-t { font: 700 5px "Noto Sans", sans-serif; fill: #555; }
.help-q { font: 700 20px "Noto Sans", sans-serif; fill: #fff; }
.qmark { font: 700 28px "Noto Sans", sans-serif; fill: #fff; }
.ov-letter { font: 500 14px "Noto Sans", sans-serif; fill: #b8dcd6; }
.xl { font: 700 13px "Noto Sans", sans-serif; fill: #fff; }

/* browser tab strip */
.tabs { flex: none; height: 51px; background: #dee1e6; display: flex; padding-left: 15px; position: relative; }
.tab { width: 150px; height: 51px; display: flex; align-items: center; padding-left: 15px; position: relative; color: #45494f; font: 17px "Noto Sans", sans-serif; }
.tab::after { content: ""; position: absolute; right: 0; top: 12px; height: 29px; width: 1px; background: #9aa0a6; }
.tab-last::after, .tab-active::after { display: none; }
.fav { width: 24px; height: 24px; margin-right: 12px; }
.fav-tall { height: 28px; }
.tab-title { width: 56px; overflow: hidden; white-space: nowrap; -webkit-mask-image: linear-gradient(90deg, #000 65%, transparent 100%); mask-image: linear-gradient(90deg, #000 65%, transparent 100%); }
.tab-x { margin-left: 13px; width: 12px; height: 12px; }
.tab-active { width: 153px; background: #fff; border-radius: 14px 14px 0 0; padding-left: 18px; }
.tab-active::before { content: ""; position: absolute; left: -8px; right: -8px; bottom: 0; height: 8px; background: radial-gradient(circle at 0 0, #dee1e6 8px, #fff 8.500px) left/8px 8px no-repeat, radial-gradient(circle at 100% 0, #dee1e6 8px, #fff 8.500px) right/8px 8px no-repeat; }
.newtab { width: 18px; height: 18px; margin: 16px 0 0 23px; }
.win { margin-left: auto; display: flex; align-items: center; gap: 54px; padding-right: 24px; }
.win svg:nth-child(1) { width: 14px; height: 10px; margin-top: -3px; }
.win svg:nth-child(2) { width: 14px; height: 10px; }
.win svg:nth-child(3), .win svg:nth-child(4) { width: 16px; height: 24px; }

/* browser toolbar */
.toolbar { flex: none; height: 51px; background: #fff; display: flex; align-items: center; padding-left: 22px; }
.tb-ic { width: 22px; height: 22px; margin-right: 26px; }
.omni { width: 1548px; height: 42px; margin: 3px 0 0 -3px; border-radius: 21px; background: #f1f3f4; display: flex; align-items: center; padding-left: 18px; }
.lock { width: 14px; height: 18px; }
.url { margin-left: 18px; font: 19.900px "Noto Sans", sans-serif; color: #6b6e72; white-space: nowrap; }
.url b { font-weight: 400; color: #202124; }
.om-ic { width: 24px; height: 24px; }
.om-share { margin-left: auto; margin-right: 25px; }
.omni .om-ic:last-child { margin-right: 15px; }
.tb-ext { width: 24px; height: 24px; margin-left: 20px; }
.tb-side { width: 22px; height: 22px; margin-left: 25px; }
.avatar { border-radius: 50%; background: #00897b; color: #dff3ef; display: flex; align-items: center; justify-content: center; font: 17px "Noto Sans", sans-serif; flex: none; }
.avatar-sm { width: 33px; height: 33px; margin-left: 21px; }
.tb-dots { width: 6px; height: 22px; margin-left: 30px; }

/* bookmarks */
.bookmarks { flex: none; height: 53px; background: #fff; border-bottom: 2px solid #dadce0; display: flex; align-items: center; padding: 0 0 4px 22px; font: 16.800px "Noto Sans", sans-serif; color: #3c4043; position: relative; }
.bm { display: flex; align-items: center; gap: 12px; margin-right: 25px; white-space: nowrap; }
.bm-loose { letter-spacing: .2px; }
.bm-tight { letter-spacing: -.15px; }
.bm-tighter { letter-spacing: -.25px; }
.bm-gap { margin-right: 27px; }
.bm-ic { width: 24px; height: 24px; }
.bm-more { position: absolute; left: 1878px; font-size: 18px; }

/* app header */
.apphead { flex: none; height: 54px; background: #fff; border-bottom: 1px solid #ced6e8; display: flex; align-items: stretch; padding-left: 15px; position: relative; }
.app-logo { width: 22px; height: 28px; align-self: center; }
.apptab { font-size: 20.700px; font-weight: 500; color: #666; margin-left: 46px; display: flex; align-items: center; border-bottom: 3px solid transparent; padding-top: 4px; }
.apptab-on { margin-left: 62px; color: #5d76ff; border-bottom-color: #5d76ff; padding: 0; }
.project { display: flex; align-items: center; gap: 16px; margin-left: 512px; font-size: 21.400px; font-weight: 600; color: #333; padding-bottom: 5px; }
.proj-logo { width: 24px; height: 28px; }
.head-acts { display: flex; align-items: center; margin-left: auto; gap: 36px; }
.head-acts svg { width: 18px; height: 26px; }
.avatar-lg { width: 36px; height: 36px; align-self: center; margin-left: 27px; font-size: 19px; }
.head-chev { width: 14px; height: 10px; align-self: center; margin: 0 25px 0 12px; color: #5d76ff; }

/* work area */
.work { flex: 1; display: flex; min-height: 0; }
.rail { width: 54px; flex: none; border-right: 1px solid #ced6e8; display: flex; flex-direction: column; align-items: center; padding-top: 6px; background: #fff; }
.rail-item { width: 42px; height: 54px; display: flex; align-items: center; justify-content: center; }
.rail-item svg { width: 26px; height: 26px; }
.rail-on { height: 42px; margin-bottom: 6px; background: #e6ecfd; border-radius: 50%; }
.stage { flex: 1; display: flex; flex-direction: column; min-width: 0; }
.subbar { flex: none; height: 56px; background: #f5f8fe; border-bottom: 1px solid #ced6e8; display: flex; align-items: center; }
.screen-tab { margin: 3px 0 0 846px; width: 117px; height: 37px; background: #e6ecfd; color: #5d76ff; font-size: 20px; display: flex; align-items: center; justify-content: center; }
.screen-add { width: 16px; height: 16px; margin: 2px 0 0 14px; }
.public { margin: 3px 15px 0 auto; width: 93px; height: 35px; border-radius: 18px; background: #5d76ff; color: #fff; font-weight: 700; font-size: 20px; display: flex; align-items: center; justify-content: center; }
.panels { flex: 1; display: flex; min-height: 0; }

/* left panel */
.left { width: 383px; flex: none; background: #fff; display: flex; flex-direction: column; overflow: hidden; }
.tree { height: 242px; flex: none; border-bottom: 2px solid #ced6e8; display: flex; flex-direction: column; font-size: 17px; color: #666; overflow: hidden; letter-spacing: .4px; }
.row-screen { height: 46px; flex: none; margin-left: 23px; background: #8a80ff; border-left: 4px solid #6d70f5; color: #fff; display: flex; align-items: center; padding: 2px 0 0 1px; }
.tri-s { width: 12px; height: 7px; color: #4b4bb5; margin-right: 21px; margin-top: -8px; }
.ic-phone-w { width: 16px; height: 22px; color: #fff; margin-right: 16px; }
.tree-l1 { flex: 1; margin-left: 45px; border-left: 1px solid #f0f0f0; display: flex; flex-direction: column; }
.row-group { height: 45px; flex: none; display: flex; align-items: center; padding-left: 28px; }
.tri-g { width: 14px; height: 8px; color: #444; margin-right: 16px; margin-top: -4px; }
.ic-group { width: 24px; height: 24px; margin-right: 12px; }
.tree-l2 { flex: 1; margin-left: 46px; border-left: 1px solid #f0f0f0; }
.row-item { height: 45px; display: flex; align-items: center; padding-left: 28px; gap: 15px; }
.ic-btn { width: 20px; height: 12px; }
.add-title { flex: none; margin: 0; height: 45px; padding-left: 18px; display: flex; align-items: center; font-size: 20.500px; font-weight: 600; color: #3a3a3a; border-bottom: 1px solid #dfe3ec; }
.search { flex: none; width: 359px; height: 47px; margin: 25px 0 0 12px; border: 1px solid #dcdfe6; border-radius: 5px; display: flex; align-items: center; justify-content: space-between; padding: 1px 19px 0 17px; font-size: 20px; color: #bdbdbd; letter-spacing: .4px; }
.search svg { width: 20px; height: 20px; }
.comps { display: grid; grid-template-columns: repeat(3, 120px); grid-auto-rows: 120px; margin-top: 40px; }
.comp { display: flex; flex-direction: column; align-items: center; text-align: center; font-size: 17px; line-height: 21px; color: #777; letter-spacing: .3px; white-space: nowrap; }
.comp svg { width: 36px; height: 36px; margin-bottom: 18px; }

/* canvas */
.canvas { position: relative; width: 1064px; flex: none; background: #d0d7e7; overflow: hidden; }
.phone { width: 404px; height: 720px; margin: 13px 0 0 326px; background: #fff; border: 1px dashed #f4606c; border-radius: 26px; box-shadow: 0 4px 18px rgba(90, 100, 140, .22); padding-top: 8px; overflow: hidden; display: flex; flex-direction: column; }
.ph-title { flex: none; height: 62px; margin: 0 4px; background: #f9e81e; color: #000; font: 700 41.500px/56px "Noto Sans", sans-serif; text-align: center; }
.ph-row { flex: none; display: flex; align-items: flex-start; margin-left: 4px; }
.ph-label { border: 2px solid #f0f0f0; font: 700 18.200px "Noto Sans", sans-serif; color: #000; white-space: nowrap; }
.ph-input { border: 2px solid #f0f0f0; }
.ph-row1 { margin-top: 12px; height: 31px; gap: 12px; }
.ph-l1 { width: 175px; height: 31px; margin-top: 1px; line-height: 22px; }
.ph-i1 { width: 208px; height: 28px; }
.ph-row2 { margin-top: 7px; height: 34px; gap: 10px; }
.ph-l2 { width: 217px; height: 32px; margin-top: 2px; line-height: 24px; }
.ph-i2 { width: 167px; height: 32px; }
.ph-row3 { margin-top: 4px; height: 35px; gap: 8px; }
.ph-l3 { width: 247px; height: 35px; line-height: 24px; }
.ph-i3 { width: 139px; height: 32px; margin-top: 3px; }
.ph-rule { flex: none; height: 2px; background: #eeeeee; }
.ph-rule1 { margin-top: 17px; }
.ph-image { flex: none; width: 393px; height: 220px; margin: 13px 0 0 4px; border: 2px solid #f0f0f0; display: flex; justify-content: center; position: relative; }
.map { width: 314px; height: 222px; margin-top: -2px; }
.ph-rule2 { margin-top: 19px; }
.badges { flex: none; display: grid; grid-template-columns: 186px 186px; column-gap: 20px; grid-auto-rows: 41px; row-gap: 24px; margin: 14px 0 0 6px; }
.badge { display: flex; align-items: center; justify-content: center; gap: 12px; color: #fff; font: 500 16px "Roboto", sans-serif; white-space: nowrap; overflow: hidden; }
.b-low { margin-top: 8px; height: 40px; }
.b-cc { background: #f59b2c; color: #3f3a33; gap: 13px; font-size: 18px; }
.b-ew { background: #04963f; }
.b-te { background: #97591f; gap: 11px; justify-content: flex-start; padding-left: 7px; }
.b-ne { background: #873f97; }
.b-ns { background: #e3201c; }
.b-dt { background: #0059a8; }
.pill { flex: none; height: 26px; border: 1.500px solid rgba(255, 255, 255, .75); border-radius: 9px; display: flex; align-items: center; justify-content: center; font-size: 14.500px; }
.p-cc { width: 44px; }
.p-sm { width: 29px; }
.p-md { width: 38px; }
.p-lg { width: 40px; }
.b-narrow { display: inline-block; width: 136px; font-size: 15px; transform: scaleX(.78); transform-origin: 0 50%; }
.ph-rule3 { margin-top: 58px; }

.canvas-tools { position: absolute; top: 14px; right: 14px; width: 265px; height: 73px; background: #fff; display: flex; align-items: center; justify-content: space-between; padding: 0 25px; }
.canvas-tools > svg { width: 24px; height: 24px; }
.tool-on { width: 42px; height: 42px; border-radius: 50%; background: #e6ecfd; display: flex; align-items: center; justify-content: center; margin: 0 -9px; }
.tool-on svg { width: 24px; height: 24px; }

/* right panel */
.right { width: 419px; flex: none; display: flex; background: #fff; border-left: 1px solid #ced6e8; overflow: hidden; }
.props { width: 403px; flex: none; }
.prop-head { height: 62px; display: flex; align-items: center; padding: 2px 0 0 29px; font-size: 20.500px; font-weight: 600; color: #444; border-bottom: 1px solid #ced6e8; letter-spacing: .4px; }
.ic-phone-b { width: 14px; height: 22px; color: #5d76ff; margin-right: 17px; }
.prop-dots { width: 8px; height: 26px; margin-left: auto; margin-right: 10px; }
.sec { height: 53px; background: #f7f8fb; border-bottom: 1px solid #ced6e8; display: flex; align-items: center; padding: 2px 0 0 19px; font-size: 17px; color: #666; letter-spacing: .2px; }
.sec-tri { width: 12px; height: 7px; color: #5d76ff; margin-right: 16px; }
.sec-status { margin-top: 33px; border-top: 1px solid #ced6e8; height: 54px; }
.form { padding-left: 18px; }
.f-label { display: block; height: 24px; line-height: 26px; margin-top: 17px; font-size: 17px; color: #666; letter-spacing: .35px; }
.f-first { margin-top: 19px; }
.f-l16 { margin-top: 16px; }
.f-cut { margin: 21px 0 0 18px; }
.f-box { margin-top: 14px; width: 382px; height: 48px; border: 1px solid #d9dde6; border-radius: 5px; display: flex; align-items: center; padding-left: 16px; font: 19.500px "Liberation Sans", sans-serif; color: #bdbdbd; }
.f-color { width: 267px; height: 47px; padding-left: 23px; color: #c4c4c4; }
.f-tall { height: 60px; }
.f-tight { margin-top: 13px; }
.f-val { color: #8a8a8a; }
.swatch { width: 16px; height: 16px; border-radius: 50%; background: #fff; box-shadow: 0 1px 3px rgba(0, 0, 0, .3); margin-right: 10px; }
.rgba { white-space: nowrap; word-spacing: 1.500px; }
.f-chev { width: 14px; height: 10px; color: #7c86b3; margin-left: 12px; }
.f-end { margin-left: auto; margin-right: 18px; }
.toggle { margin-top: 15px; width: 86px; height: 33px; border-radius: 17px; background: #bdbdbd; display: flex; align-items: center; padding-left: 3px; gap: 7px; color: #fff; font: 700 16px "Liberation Sans", sans-serif; }
.knob { width: 29px; height: 29px; border-radius: 50%; background: #fff; box-shadow: -1px 1px 2px rgba(0, 0, 0, .3); }
.scroll { flex: 1; padding: 5px 0 0 4px; }
.thumb { display: block; width: 12px; height: 376px; border-radius: 6px; background: #c0c0c0; }

.chat { position: absolute; left: 1800px; top: 889px; width: 90px; height: 90px; border-radius: 50%; background: #f2a945; display: flex; align-items: center; justify-content: center; box-shadow: 0 2px 16px rgba(0, 0, 0, .12); }
.chat svg { width: 42px; height: 46px; margin-top: 2px; }

/* taskbar */
.taskbar { flex: none; height: 72px; background: #1f1f1f; display: flex; align-items: center; color: #fff; font: 17.500px "Noto Sans", sans-serif; position: relative; }
.weather { width: 385px; flex: none; display: flex; align-items: center; padding-left: 30px; gap: 11px; }
.weather svg { width: 36px; height: 32px; }
.w-txt { display: flex; flex-direction: column; line-height: 25px; padding-top: 2px; }
.w-sub { color: #ddd; }
.dock { display: flex; width: 1056px; flex: none; }
.dk { width: 66px; height: 72px; display: flex; align-items: center; justify-content: center; position: relative; }
.dk svg { width: 36px; height: 36px; }
.dk svg.big { width: 46px; height: 46px; margin-top: -8px; margin-left: 10px; }
.dk-dot::after { content: ""; position: absolute; bottom: 6px; left: 29px; width: 9px; height: 5px; border-radius: 3px; background: #8d8d8d; }
.dk-on { background: #2d2d2d; border-radius: 6px; height: 60px; width: 60px; margin: 6px 3px; }
.dk-on::after { content: ""; position: absolute; bottom: 0; left: 18px; width: 24px; height: 5px; border-radius: 3px; background: #4cc2ff; }
.tray { flex: 1; display: flex; align-items: center; position: relative; }
.tr-up { width: 18px; height: 10px; margin-left: 28px; }
.tr-cloud { width: 24px; height: 18px; margin-left: 16px; }
.tr-sync { width: 26px; height: 30px; margin-left: 10px; }
.tr-lang { display: flex; flex-direction: column; align-items: center; line-height: 26px; margin-left: 21px; width: 36px; }
.tr-wifi { width: 24px; height: 20px; margin-left: 28px; }
.tr-vol { width: 24px; height: 22px; margin-left: 11px; }
.tr-bat { width: 26px; height: 22px; margin-left: 13px; }
.tr-time { display: flex; flex-direction: column; align-items: flex-end; line-height: 26px; margin-left: 14px; width: 91px; white-space: nowrap; }
.tr-note { width: 24px; height: 24px; border-radius: 50%; background: #4cc2ff; color: #0d2330; display: flex; align-items: center; justify-content: center; font-size: 15px; margin-left: 14px; }
```
